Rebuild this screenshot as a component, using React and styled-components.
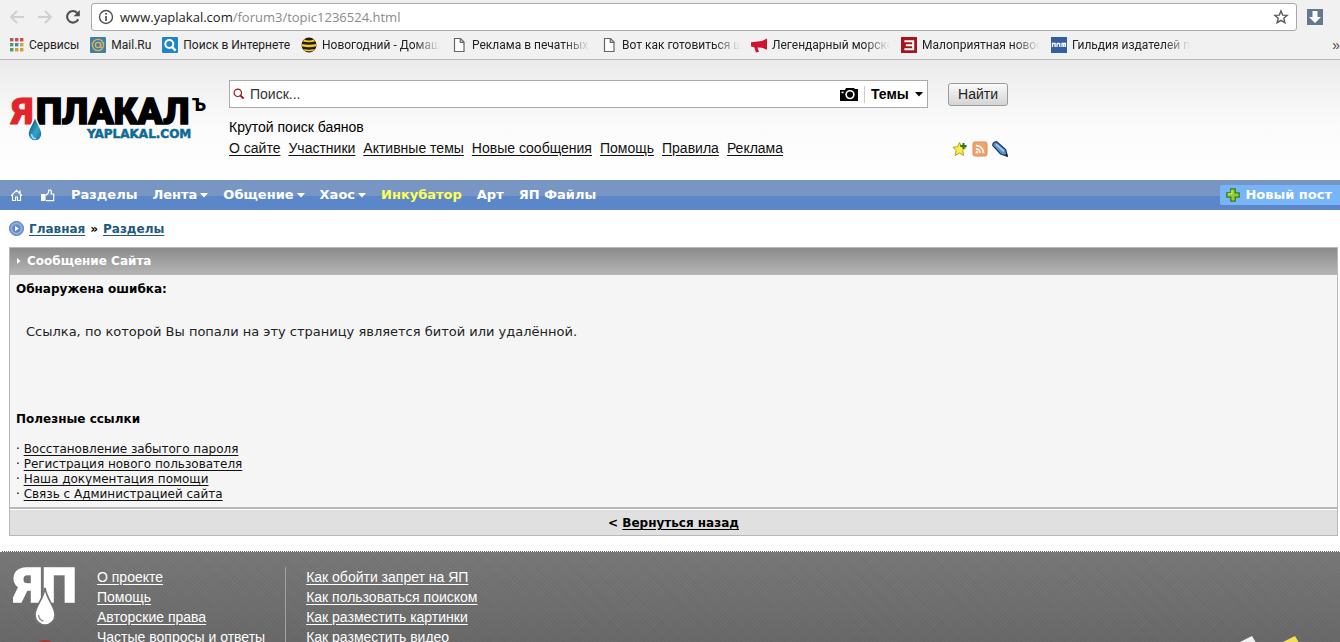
import styled, { createGlobalStyle, css } from 'styled-components';

const GlobalStyle = createGlobalStyle`
  * {
    box-sizing: border-box;
  }

  body {
    margin: 0;
    background: #fff;
    color: #000;
    font-family: 'DejaVu Sans', Verdana, sans-serif;
    font-size: 12px;
  }

  ul {
    list-style: none;
    margin: 0;
    padding: 0;
  }
`;

const Window = styled.div`
  display: flex;
  flex-direction: column;
  height: 100vh;
  overflow: hidden;
`;

/* ---------- browser bars ---------- */

const BrowserBar = styled.header`
  flex: none;
  background: #f1f1f1;
  border-bottom: 1px solid #b6b6b6;
  font-family: Roboto, 'Noto Sans', sans-serif;
`;

const Toolbar = styled.div`
  display: flex;
  align-items: center;
  padding: 3px 17px 3px 8px;
`;

const ToolButton = styled.button`
  display: flex;
  align-items: center;
  justify-content: center;
  width: 18px;
  height: 18px;
  margin-right: 10px;
  padding: 0;
  border: 0;
  background: none;

  &:last-of-type {
    margin-right: 9px;
  }
`;

const Omnibox = styled.div`
  flex: 1;
  display: flex;
  align-items: center;
  gap: 6px;
  height: 28px;
  margin-right: 10px;
  padding: 0 7px 0 6px;
  background: #fff;
  border: 1px solid #a9a9a9;
  border-radius: 3px;
`;

const Address = styled.div`
  flex: 1;
  color: #8a8a8a;
  font-family: 'Open Sans', sans-serif;
  font-size: 13px;
  line-height: 20px;

  span {
    color: #222;
  }
`;

const Bookmarks = styled.nav`
  display: flex;
  align-items: center;
  gap: 11px;
  height: 25px;
  padding: 0 0 3px 8px;
`;

const Bookmark = styled.a`
  flex: none;
  display: flex;
  align-items: center;
  gap: 5px;
  max-width: 139px;
  color: #222;
  font-size: 12px;
  line-height: 18px;
  text-decoration: none;
  white-space: nowrap;

  svg {
    flex: none;
  }

  span {
    overflow: hidden;
    ${({ $fade }) => $fade && css`
      mask-image: linear-gradient(to right, #000 calc(100% - 26px), transparent);
    `}
  }
`;

const More = styled.button`
  margin-left: auto;
  padding: 0;
  border: 0;
  background: none;
  color: #444;
  font-size: 14px;
  line-height: 18px;
`;

/* ---------- site header ---------- */

const Page = styled.div`
  flex: 1;
  display: flex;
  flex-direction: column;
  min-height: 0;
`;

const SiteHeader = styled.div`
  flex: none;
  display: flex;
  padding: 20px 12px 21px 9px;
  background: linear-gradient(#ebebeb, #fbfbfb 55%, #fff);
`;

const LogoLink = styled.a`
  flex: none;
  width: 220px;
  padding-top: 12px;
`;

const HeaderMain = styled.div`
  flex: 1;
  max-width: 779px;
  font-family: 'Liberation Sans', Arial, sans-serif;
  font-size: 14px;
  line-height: 21px;
`;

const SearchForm = styled.form`
  display: flex;
  align-items: center;
  gap: 20px;
  margin-bottom: 9px;
`;

const SearchBox = styled.div`
  flex: 1;
  display: flex;
  align-items: center;
  height: 28px;
  padding: 0 4px 0 3px;
  background: #fff;
  border: 1px solid #aaa;
`;

const SearchInput = styled.input`
  flex: 1;
  min-width: 0;
  margin-left: 5px;
  padding: 0;
  border: 0;
  outline: 0;
  background: none;
  font: inherit;

  &::placeholder {
    color: #333;
    opacity: 1;
  }
`;

const ScopeLabel = styled.label`
  display: flex;
  align-items: center;
  margin-left: 6px;
  padding-left: 6px;
  border-left: 1px solid #ccc;
`;

const ScopeSelect = styled.select`
  appearance: none;
  width: 44px;
  padding: 0;
  border: 0;
  background: none;
  color: #000;
  font: inherit;
  font-weight: bold;
  line-height: 17px;
`;

const SubmitButton = styled.button`
  width: 60px;
  height: 23px;
  padding: 0;
  border: 1px solid #9a9a9a;
  border-radius: 3px;
  background: linear-gradient(#fafafa, #d4d4d4);
  color: #222;
  font: inherit;
`;

const HeaderLinks = styled.nav`
  display: flex;
  gap: 8px;

  a {
    color: #111;
    text-underline-offset: 2px;
  }
`;

const HeaderIcons = styled.div`
  display: flex;
  align-items: center;
  gap: 4px;
  margin-left: auto;

  a {
    display: flex;
  }
`;

/* ---------- blue menu ---------- */

const Menu = styled.nav`
  flex: none;
  display: flex;
  align-items: center;
  gap: 15px;
  height: 30px;
  padding-left: 11px;
  background: linear-gradient(#7896c4 0 16px, #5b87c8 16px);
`;

const MenuLink = styled.a`
  display: flex;
  align-items: center;
  gap: 3px;
  color: ${({ $accent }) => ($accent ? '#ff5' : '#fff')};
  font-size: 13px;
  font-weight: bold;
  line-height: 20px;
  text-decoration: none;
  white-space: nowrap;
`;

const IconLink = styled(MenuLink)`
  margin-right: 1px;
`;

const NewPost = styled(MenuLink)`
  gap: 5px;
  margin-left: auto;
  padding: 0 8px 0 6px;
  background: #77b4f8;
  border-radius: 2px 0 0 2px;
`;

/* ---------- content ---------- */

const Breadcrumbs = styled.nav`
  flex: none;
  display: flex;
  align-items: center;
  gap: 5px;
  height: 37px;
  padding-left: 9px;
  font-weight: bold;

  a {
    color: #22597d;
    text-underline-offset: 2px;
  }
`;

const Panel = styled.section`
  flex: none;
  margin: 0 2px 15px 9px;
  border: 1px solid #b8b8b8;
`;

const PanelTitle = styled.h1`
  display: flex;
  align-items: center;
  gap: 6px;
  height: 27px;
  margin: 0;
  padding: 0 0 2px 7px;
  background: linear-gradient(#8b8b8b, #b6b6b6);
  color: #fff;
  font-size: 12px;
  line-height: 16px;
`;

const PanelBody = styled.div`
  padding: 6px 6px 5px;
  background: #f5f5f5;
`;

const Heading = styled.h2`
  margin: 0;
  font-size: 12px;
  line-height: 16px;
`;

const Message = styled.p`
  margin: 27px 10px 71px;
  color: #222;
  font-size: 13px;
  line-height: 16px;
`;

const LinkList = styled.ul`
  margin-top: 15px;
  line-height: 15px;

  a {
    color: #111;
    text-underline-offset: 2px;
  }
`;

const PanelFooter = styled.div`
  height: 28px;
  border-top: 2px solid #b8b8b8;
  box-shadow: inset 0 1px #fff;
  background: #e0e0e0;
  font-weight: bold;
  line-height: 28px;
  text-align: center;

  a {
    color: #000;
    text-underline-offset: 2px;
  }
`;

/* ---------- footer ---------- */

const Footer = styled.footer`
  flex: 1 0 auto;
  display: flex;
  align-items: flex-start;
  padding: 15px 40px 0 13px;
  border-top: 1px dotted #fff;
  background:
    repeating-linear-gradient(45deg, rgba(0, 0, 0, 0.03) 0 1px, transparent 1px 3px),
    repeating-linear-gradient(135deg, rgba(0, 0, 0, 0.02) 0 1px, transparent 1px 3px),
    linear-gradient(#797979, #676767);
`;

const FooterLinks = styled.ul`
  padding-left: 20px;
  font-family: 'Liberation Sans', Arial, sans-serif;
  font-size: 14px;
  line-height: 20px;

  & + & {
    margin-left: 20px;
    border-left: 1px solid #a2a2a2;
  }

  a {
    color: #fff;
    text-underline-offset: 2px;
  }
`;

const FooterArt = styled.svg`
  margin: 69px 0 0 auto;
`;

/* ---------- drawings ---------- */

const Caret = ({ color = '#fff' }) => (
  <svg width="8" height="5" viewBox="0 0 8 5"><path d="M0 0h8L4 4.5z" fill={color} /></svg>
);

const Arrow = ({ flip }) => (
  <svg width="16" height="16" viewBox="0 0 16 16" fill="none" stroke="#cfcfcf" strokeWidth="1.8">
    <path d={flip ? 'M1 8h13M8 2l6 6-6 6' : 'M15 8H2M8 2L2 8l6 6'} />
  </svg>
);

const Reload = () => (
  <svg width="16" height="16" viewBox="0 0 16 16">
    <path d="M13.2 10.2A5.8 5.8 0 1 1 12.3 4" fill="none" stroke="#505050" strokeWidth="2.1" />
    <path d="M14.8 1v6.3H8.6z" fill="#505050" />
  </svg>
);

const Info = () => (
  <svg width="16" height="16" viewBox="0 0 16 16">
    <circle cx="8" cy="8" r="6.5" fill="none" stroke="#505050" strokeWidth="1.4" />
    <path d="M7.2 4h1.7v1.7H7.2zM7.2 7h1.7v5H7.2z" fill="#505050" />
  </svg>
);

const Star = () => (
  <svg width="16" height="16" viewBox="0 0 16 16" fill="none" stroke="#5a5a5a" strokeWidth="1.4">
    <path d="M8 1.9l1.7 4.2 4.5.3-3.4 2.9 1.1 4.4L8 11.3l-3.9 2.4 1.1-4.4L1.8 6.4l4.5-.3z" />
  </svg>
);

const Download = () => (
  <svg width="16" height="16" viewBox="0 0 16 16">
    <path d="M0 0h16v16H0z" fill="#64788f" />
    <path d="M5.5 2h5v6H14l-6 6-6-6h3.5z" fill="#fff" />
  </svg>
);

const appColors = ['#c8504b', '#c8504b', '#c8504b', '#4c9e68', '#4b83b8', '#c9a43a', '#4c9e68', '#c9a43a', '#c9a43a'];

const Favicon = ({ kind }) => (
  <svg width="16" height="16" viewBox="0 0 16 16">
    {kind === 'apps' && appColors.map((color, i) => (
      <rect key={i} x={2 + (i % 3) * 5} y={1 + Math.floor(i / 3) * 5} width="3.4" height="3.4" fill={color} />
    ))}
    {kind === 'mail' && (
      <>
        <rect width="16" height="16" rx="1" fill="#3f7fa6" />
        <g fill="none" stroke="#e0b05a" strokeWidth="1.4">
          <circle cx="8" cy="8" r="2.6" />
          <circle cx="8" cy="8" r="5.6" />
          <path d="M10.6 5.5V9q.2 1.6 1.6 1.2" />
        </g>
      </>
    )}
    {kind === 'search' && (
      <>
        <rect width="16" height="16" rx="1" fill="#1e86c8" />
        <g fill="none" stroke="#fff">
          <circle cx="7.3" cy="7" r="4" strokeWidth="2" />
          <path d="M10 10l3.6 3.6" strokeWidth="2.4" />
        </g>
      </>
    )}
    {kind === 'bee' && (
      <>
        <circle cx="8" cy="8" r="7.5" fill="#251c08" />
        <path d="M3.2 2.5Q8 4.5 12.8 2.5L14 4.6Q8 6 2 4.6zM.7 7Q8 8.6 15.3 7v2.3Q8 11 .7 9.3zM2 12Q8 13.5 14 12l-1.5 1.7Q8 14.9 3.5 13.7z" fill="#f0cb35" />
      </>
    )}
    {kind === 'page' && (
      <path d="M3.5 1.5h6l3.5 3.6v9.4H3.5zM9.3 1.5v3.8H13" fill="#fff" stroke="#666" strokeWidth="1.2" />
    )}
    {kind === 'horn' && (
      <path d="M0 5.2L11 4l5-2.6v11.4l-5-2-4.6-.3 1.6 4.2-3 .9-1.8-5.4L0 9.6z" fill="#cf1430" />
    )}
    {kind === 'ze' && (
      <>
        <path d="M0 0h16v16H0z" fill="#a8141c" />
        <path d="M3.4 4.2h8.8v8H3.4M4.8 8.2h7" fill="none" stroke="#fff" strokeWidth="2" />
      </>
    )}
    {kind === 'guild' && (
      <>
        <path d="M0 0h16v16H0z" fill="#345f9e" />
        <path d="M1.5 10V6.5h2.6V10M6 6.2V10M6 6.5h2.8M8.8 6.2V10M11 10V6.5h3.4V10M12.7 6.5V10" fill="none" stroke="#fff" strokeWidth="1.3" />
      </>
    )}
  </svg>
);

const Logo = () => (
  <svg width="200" height="54" viewBox="0 0 200 54" fontFamily="Roboto, sans-serif" fontWeight="900">
    <defs>
      <linearGradient id="drop" x1="0" x2="1" y2="1">
        <stop offset="0.2" stopColor="#0a5a80" />
        <stop offset="0.6" stopColor="#36a3cc" />
        <stop offset="1" stopColor="#0a6690" />
      </linearGradient>
    </defs>
    <text x="3" y="32" fontSize="37" fill="#e2252c" stroke="#e2252c">Я</text>
    <text x="27" y="32" fontSize="37" stroke="#000" strokeWidth="1.6">ПЛАКАЛ</text>
    <text x="183" y="19" fontSize="18">Ъ</text>
    <text x="78" y="46" fontFamily="DejaVu Sans, sans-serif" fontSize="12" fill="#0f6c94" stroke="#0f6c94" strokeWidth="0.5">YAPLAKAL.COM</text>
    <path d="M26 24c2 8 7 12 7 18a7 7 0 0 1-14 0c0-6 5-10 7-18z" fill="url(#drop)" stroke="#fff" strokeWidth="1.4" />
    <path d="M22.5 42q.5 4.4 4.5 4.8" fill="none" stroke="#a7dcf0" strokeWidth="1.6" />
  </svg>
);

const FooterLogo = () => (
  <svg width="64" height="80" viewBox="0 0 64 80" fontFamily="Roboto, sans-serif" fontWeight="900">
    <text x="1" y="35" fontSize="49" fill="#fff" stroke="#fff" strokeWidth="1.6">ЯП</text>
    <path d="M32 21c2 12 10 18 10 27a10 10 0 0 1-20 0c0-9 8-15 10-27z" fill="#fff" stroke="#727272" strokeWidth="1.6" />
    <path d="M25.5 48q.6 5 4.8 6" fill="none" stroke="#888" strokeWidth="1.4" />
    <circle cx="32" cy="86" r="13" fill="#a03434" />
  </svg>
);

const SearchGlyph = () => (
  <svg width="12" height="12" viewBox="0 0 12 12" fill="none" stroke="#9c1226">
    <circle cx="4.8" cy="4.8" r="3.7" strokeWidth="1.2" />
    <path d="M7.6 7.6l3 3" strokeWidth="2" />
  </svg>
);

const Camera = () => (
  <svg width="18" height="13" viewBox="0 0 18 13">
    <path d="M0 2h5l1-2h8l1 1h3v12H0z" />
    <circle cx="10" cy="6.6" r="3.9" fill="none" stroke="#fff" strokeWidth="1.6" />
    <path d="M1.6 3.6h2v1.6h-2z" fill="#fff" />
  </svg>
);

const FavoriteStar = () => (
  <svg width="16" height="16" viewBox="0 0 16 16">
    <path d="M7.5 1.5l1.9 4.2 4.8.6-3.5 3.2 1 5-4.2-2.5-4.5 2.6 1.2-5L1 6.3l4.6-.6z" fill="#fbe94d" stroke="#b6a01d" />
    <path d="M8.3 5h6.2M11.5 2v6" stroke="#277a1e" strokeWidth="2" />
  </svg>
);

const Rss = () => (
  <svg width="16" height="16" viewBox="0 0 16 16">
    <rect x="1" y="1" width="14" height="14" rx="2" fill="#f0a36c" stroke="#df8b50" />
    <g fill="none" stroke="#fff" strokeWidth="1.6">
      <path d="M4 8a4 4 0 0 1 4 4M4 4.5a7.5 7.5 0 0 1 7.5 7.5" />
    </g>
    <circle cx="4.9" cy="11.2" r="1.2" fill="#fff" />
  </svg>
);

const Pencil = () => (
  <svg width="16" height="16" viewBox="0 0 16 16">
    <path d="M.8 4.6Q.6 1 4.6.7l9 7.8 1.8 6.7-6.8-2.2z" fill="#5b93cf" stroke="#1e3a5c" strokeWidth="1.3" />
    <path d="M4 3.4l8 7" stroke="#a9cdf0" strokeWidth="1.6" />
    <path d="M15.8 15.8l-1-3.6-2.6 2.4z" fill="#14283f" />
  </svg>
);

const Home = () => (
  <svg width="14" height="13" viewBox="0 0 14 13" fill="none" stroke="#fff" strokeWidth="1.2">
    <path d="M0 6.8L5.5 1.4 11 6.8M1.5 6v5.5h3V8h2v3.5h3V6M9 4.2V1.2" />
  </svg>
);

const ThumbUp = () => (
  <svg width="14" height="13" viewBox="0 0 14 13">
    <path d="M0 5h4.6v7H0z" fill="#fff" />
    <path d="M5 6.2L7.4 4l.4-3h1.6l.9 1v3h2.4v6.6H5" fill="none" stroke="#fff" strokeWidth="1.2" />
  </svg>
);

const Plus = () => (
  <svg width="14" height="14" viewBox="0 0 14 14">
    <path d="M4.8.8h4.4v4h4v4.4h-4v4H4.8v-4h-4V4.8h4z" fill="#8fd02f" stroke="#3c7a1c" strokeWidth="1.3" />
    <path d="M5.9 2v3.9H2" fill="none" stroke="#d4f29a" />
  </svg>
);

const CrumbIcon = () => (
  <svg width="15" height="15" viewBox="0 0 15 15">
    <circle cx="7.5" cy="7.5" r="7" fill="#7fa2dc" stroke="#5479bd" />
    <circle cx="7.5" cy="7.5" r="4.8" fill="#5c86cc" stroke="#a9c3ec" />
    <path d="M6 4.8l4 2.7-4 2.7z" fill="#fff" />
  </svg>
);

const bookmarks = [
  { icon: 'apps', text: 'Сервисы' },
  { icon: 'mail', text: 'Mail.Ru' },
  { icon: 'search', text: 'Поиск в Интернете' },
  { icon: 'bee', text: 'Новогодний - Домашний', fade: true },
  { icon: 'page', text: 'Реклама в печатных СМИ', fade: true },
  { icon: 'page', text: 'Вот как готовиться школа', fade: true },
  { icon: 'horn', text: 'Легендарный морской', fade: true },
  { icon: 'ze', text: 'Малоприятная новость', fade: true },
  { icon: 'guild', text: 'Гильдия издателей пер', fade: true },
];

const headerLinks = ['О сайте', 'Участники', 'Активные темы', 'Новые сообщения', 'Помощь', 'Правила', 'Реклама'];

const menu = [
  { text: 'Разделы' },
  { text: 'Лента', caret: true },
  { text: 'Общение', caret: true },
  { text: 'Хаос', caret: true },
  { text: 'Инкубатор', accent: true },
  { text: 'Арт' },
  { text: 'ЯП Файлы' },
];

const usefulLinks = [
  'Восстановление забытого пароля',
  'Регистрация нового пользователя',
  'Наша документация помощи',
  'Связь с Администрацией сайта',
];

const footerColumns = [
  ['О проекте', 'Помощь', 'Авторские права', 'Частые вопросы и ответы'],
  ['Как обойти запрет на ЯП', 'Как пользоваться поиском', 'Как разместить картинки', 'Как разместить видео'],
];

const App = () => {
  return (
    <Window>
      <GlobalStyle />
      <BrowserBar>
        <Toolbar>
          <ToolButton aria-label="Назад"><Arrow /></ToolButton>
          <ToolButton aria-label="Вперёд"><Arrow flip /></ToolButton>
          <ToolButton aria-label="Обновить"><Reload /></ToolButton>
          <Omnibox>
            <Info />
            <Address><span>www.yaplakal.com</span>/forum3/topic1236524.html</Address>
            <Star />
          </Omnibox>
          <Download />
        </Toolbar>
        <Bookmarks>
          {bookmarks.map(({ icon, text, fade }) => (
            <Bookmark key={text} href="#" $fade={fade}>
              <Favicon kind={icon} />
              <span>{text}</span>
            </Bookmark>
          ))}
          <More>»</More>
        </Bookmarks>
      </BrowserBar>

      <Page>
        <SiteHeader>
          <LogoLink href="#"><Logo /></LogoLink>
          <HeaderMain>
            <SearchForm>
              <SearchBox>
                <SearchGlyph />
                <SearchInput aria-label="Поиск" placeholder="Поиск..." />
                <Camera />
                <ScopeLabel>
                  <ScopeSelect aria-label="Где искать">
                    <option>Темы</option>
                  </ScopeSelect>
                  <Caret color="#000" />
                </ScopeLabel>
              </SearchBox>
              <SubmitButton type="button">Найти</SubmitButton>
            </SearchForm>
            <div>Крутой поиск баянов</div>
            <HeaderLinks>
              {headerLinks.map((text) => <a key={text} href="#">{text}</a>)}
              <HeaderIcons>
                <a href="#" aria-label="Избранное"><FavoriteStar /></a>
                <a href="#" aria-label="RSS"><Rss /></a>
                <a href="#" aria-label="Написать"><Pencil /></a>
              </HeaderIcons>
            </HeaderLinks>
          </HeaderMain>
        </SiteHeader>

        <Menu>
          <IconLink href="#" aria-label="Главная"><Home /></IconLink>
          <IconLink href="#" aria-label="Лучшее"><ThumbUp /></IconLink>
          {menu.map(({ text, caret, accent }) => (
            <MenuLink key={text} href="#" $accent={accent}>
              {text}
              {caret && <Caret />}
            </MenuLink>
          ))}
          <NewPost href="#"><Plus />Новый пост</NewPost>
        </Menu>

        <Breadcrumbs>
          <CrumbIcon />
          <a href="#">Главная</a>
          <span>»</span>
          <a href="#">Разделы</a>
        </Breadcrumbs>

        <Panel>
          <PanelTitle>
            <svg width="4" height="6" viewBox="0 0 4 6"><path d="M0 0l3.5 3L0 6z" fill="#fff" /></svg>
            Сообщение Сайта
          </PanelTitle>
          <PanelBody>
            <Heading>Обнаружена ошибка:</Heading>
            <Message>Ссылка, по которой Вы попали на эту страницу является битой или удалённой.</Message>
            <Heading>Полезные ссылки</Heading>
            <LinkList>
              {usefulLinks.map((text) => <li key={text}>· <a href="#">{text}</a></li>)}
            </LinkList>
          </PanelBody>
          <PanelFooter>&lt; <a href="#">Вернуться назад</a></PanelFooter>
        </Panel>

        <Footer>
          <FooterLogo />
          {footerColumns.map((links) => (
            <FooterLinks key={links[0]}>
              {links.map((text) => <li key={text}><a href="#">{text}</a></li>)}
            </FooterLinks>
          ))}
          <FooterArt width="60" height="20" viewBox="0 0 60 20">
            <path d="M0 6L12 0l12 20H8z" fill="#f2f2f2" />
            <path d="M43 6L55 0l12 20H51z" fill="#f4df55" />
          </FooterArt>
        </Footer>
      </Page>
    </Window>
  );
};

export default App;
